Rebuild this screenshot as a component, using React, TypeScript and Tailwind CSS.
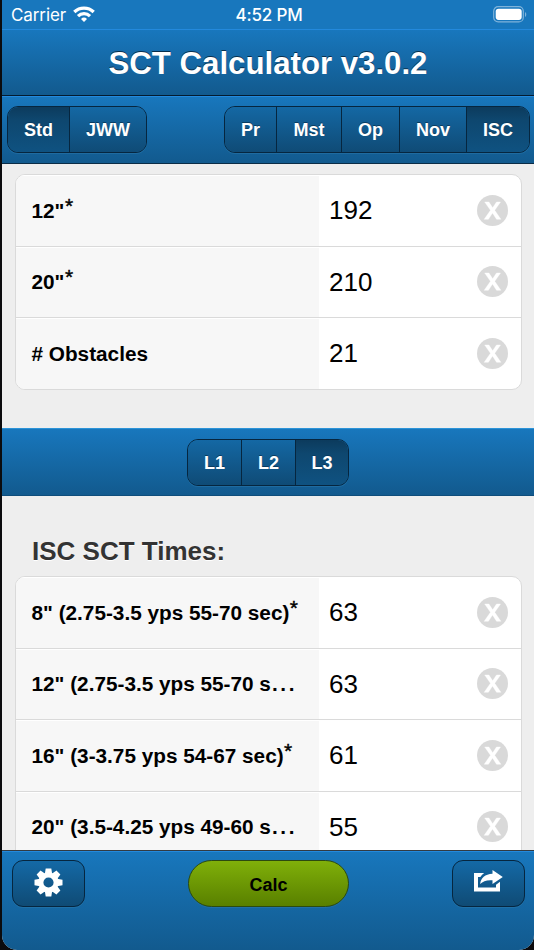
import React from 'react'
import clsx from 'clsx'

const bar = 'bg-linear-to-b from-[#1877bd] to-[#125a8e]'

type Row = { label: string; star?: boolean; more?: boolean; value: string }

const yardRows: Row[] = [
  { label: '12"', star: true, value: '192' },
  { label: '20"', star: true, value: '210' },
  { label: '# Obstacles', value: '21' },
]

const timeRows: Row[] = [
  { label: '8" (2.75-3.5 yps 55-70 sec)', star: true, value: '63' },
  { label: '12" (2.75-3.5 yps 55-70 s', more: true, value: '63' },
  { label: '16" (3-3.75 yps 54-67 sec)', star: true, value: '61' },
  { label: '20" (3.5-4.25 yps 49-60 s', more: true, value: '55' },
]

function Segments({ items, active }: { items: [string, string][]; active: string }) {
  return (
    <div className="flex h-[47px] rounded-[11px] border border-[#06263f] overflow-hidden shadow-[0_1px_0_#1f6ba0]">
      {items.map(([name, width], i) => (
        <button
          key={name}
          className={clsx(
            'h-full pt-[2px] text-[18px] font-bold text-white [text-shadow:0_-1px_0_#0a3c60]',
            width,
            i > 0 && 'border-l border-[#06263f]',
            name === active
              ? 'bg-linear-to-b from-[#0c3b5d] via-[#0e476f] via-30% to-[#0f5281]'
              : 'bg-linear-to-b from-[#1468a4] to-[#0f4b76]'
          )}
        >
          {name}
        </button>
      ))}
    </div>
  )
}

function FieldSet({ rows }: { rows: Row[] }) {
  return (
    <div className="ml-[13px] mr-[12px] rounded-[10px] border border-[#dadada] bg-white overflow-hidden">
      {rows.map((row, i) => (
        <div
          key={row.label}
          className={clsx(
            'flex items-stretch',
            i > 0 ? 'h-[71.5px] border-t border-[#dadada]' : 'h-[70.5px]'
          )}
        >
          <div className="flex w-[303px] shrink-0 items-center bg-[#f7f7f7] pl-[15.5px] text-[20.75px] font-bold text-black whitespace-nowrap shadow-[inset_0_1px_0_#ffffff]">
            <span>{row.label}</span>
            {row.star && (
              <span className="relative -top-[5px] ml-[0.5px] text-[21px] font-normal [-webkit-text-stroke:0.4px_#000]">
                *
              </span>
            )}
            {row.more && <span className="pl-px tracking-[2.6px]">...</span>}
          </div>
          <div className="flex flex-1 items-center justify-between pl-[10px] pr-[13px]">
            <span className="pt-px text-[26px] text-black">{row.value}</span>
            <ClearIcon />
          </div>
        </div>
      ))}
    </div>
  )
}

function ClearIcon() {
  return (
    <svg width="31" height="31" viewBox="0 0 31 31">
      <circle cx="15.5" cy="15.5" r="15.5" fill="#d9d9d9" />
      <path
        d="M7.7 7h4.2l3.8 5.8L19.5 7h4l-5.8 8.3 6.2 9h-4.3l-4.1-6.3-4.1 6.3H7.2l6.3-9z"
        fill="#fff"
        stroke="#fff"
        strokeWidth=".4"
      />
    </svg>
  )
}

function WifiIcon() {
  return (
    <svg width="22" height="17" viewBox="0 0 22 17" fill="none" stroke="#fff" strokeWidth="3.3">
      <path d="M1.3 6a14 14 0 0 1 19.4 0" />
      <path d="M5 10.100a8.700 8.700 0 0 1 12 0" />
      <path d="M11 16l-3-3.100a4.300 4.300 0 0 1 6 0z" fill="#fff" stroke="none" />
    </svg>
  )
}

function BatteryIcon() {
  return (
    <svg width="34" height="17" viewBox="0 0 34 17" fill="none">
      <rect x=".7" y=".7" width="29.6" height="15.2" rx="4.5" stroke="#7fb3da" strokeWidth="1.2" />
      <rect x="2.7" y="2.7" width="26" height="11.2" rx="2.8" fill="#fff" />
      <path d="M32 6v5c1.700-.8 1.700-4.200 0-5z" fill="#7fb3da" />
    </svg>
  )
}

function GearIcon() {
  return (
    <svg width="29" height="29" viewBox="-14.5 -14.5 29 29" fill="#fff">
      {[0, 45, 90, 135, 180, 225, 270, 315].map((a) => (
        <path key={a} d="M-3.7-8.5L-2.8-14h5.6L3.7-8.5z" transform={`rotate(${a})`} />
      ))}
      <circle r="7.6" fill="none" stroke="#fff" strokeWidth="5" />
    </svg>
  )
}

function ShareIcon() {
  return (
    <svg width="29" height="22" viewBox="0 0 29 22" fill="#fff">
      <path d="M0 3h10.200C8.500 4.300 7.200 5.500 6.400 7H4v10.500h18v-2.800l4-3V21.500H0z" />
      <path d="M18.500 0L28.800 7 18.500 14v-3.800C12.500 9.800 9 11 6.200 14 6.700 8 11 4.200 18.500 3.800z" />
    </svg>
  )
}

const footerButton =
  'flex h-[47px] w-[73px] justify-center rounded-[11px] border border-[#06263f] bg-linear-to-b from-[#1469a6] to-[#0f4b75] shadow-[0_1px_0_#2070a6]'

function App() {
  return (
    <div className="h-[950px] w-[534px] overflow-hidden bg-[#0b0b0d] pl-[2px] font-['Liberation_Sans',Arial,sans-serif]">
      <div className="flex h-full flex-col overflow-hidden rounded-b-[15px] bg-[#eeeeee]">
        <div className="grid h-[29px] shrink-0 grid-cols-3 items-center bg-[#1877bd] pl-[9px] pr-[7px] font-[Inter,sans-serif] text-white">
          <div className="flex items-center gap-[7px]">
            <span className="pt-[3px] text-[17px] tracking-[-0.1px]">Carrier</span>
            <WifiIcon />
          </div>
          <div className="pt-[3px] text-center text-[17px] font-medium tracking-[-0.15px] whitespace-nowrap">
            4:52 PM
          </div>
          <div className="flex justify-end">
            <BatteryIcon />
          </div>
        </div>

        <header
          className={clsx(
            'flex h-[67px] shrink-0 items-center justify-center border-t border-b border-t-[#2389dc] border-b-[#041c30] pt-[4px]',
            bar
          )}
        >
          <h1 className="text-[31.2px] font-bold text-white whitespace-nowrap [text-shadow:0_-1.5px_0_#08304e]">
            SCT Calculator v3.0.2
          </h1>
        </header>

        <div
          className={clsx(
            'flex h-[68px] shrink-0 items-start justify-between border-t border-b border-t-[#2389dc] border-b-[#0a2c46] pt-[9px] pl-[5px] pr-[4px]',
            bar
          )}
        >
          <Segments
            items={[
              ['Std', 'w-[61px]'],
              ['JWW', 'w-[77px]'],
            ]}
            active="Std"
          />
          <Segments
            items={[
              ['Pr', 'w-[51px]'],
              ['Mst', 'w-[65px]'],
              ['Op', 'w-[58px]'],
              ['Nov', 'w-[67px]'],
              ['ISC', 'w-[63px]'],
            ]}
            active="ISC"
          />
        </div>

        <main className="min-h-0 flex-1 overflow-hidden pt-[10px]">
          <FieldSet rows={yardRows} />
          <div
            className={clsx(
              'mt-[38.5px] flex h-[68px] items-start justify-center border-t border-b border-t-[#2b93d8] border-b-[#0e4d7b] pt-[10px]',
              bar
            )}
          >
            <Segments
              items={[
                ['L1', 'w-[53px]'],
                ['L2', 'w-[54px]'],
                ['L3', 'w-[53px]'],
              ]}
              active="L3"
            />
          </div>
          <h2 className="mt-[40px] mb-[9px] pl-[30px] text-[26px] leading-[31px] font-bold text-[#333333] [text-shadow:0_1px_0_#ffffff]">
            ISC SCT Times:
          </h2>
          <FieldSet rows={timeRows} />
        </main>

        <footer
          className={clsx(
            'flex h-[99px] shrink-0 items-start justify-between border-t border-t-[#2389dc] pl-[10px] pr-[9px] pt-[8px] shadow-[0_-1px_0_#333b42]',
            bar
          )}
        >
          <button className={clsx(footerButton, 'pt-[7px]')}>
            <GearIcon />
          </button>
          <button className="h-[47px] w-[161px] rounded-full border border-[#2c4a10] bg-linear-to-b from-[#80b00a] to-[#598000] pt-[3px] text-[18px] font-bold text-black shadow-[0_1px_0_#2070a6]">
            Calc
          </button>
          <button className={clsx(footerButton, 'pt-[9px]')}>
            <ShareIcon />
          </button>
        </footer>
      </div>
    </div>
  )
}

export default App
